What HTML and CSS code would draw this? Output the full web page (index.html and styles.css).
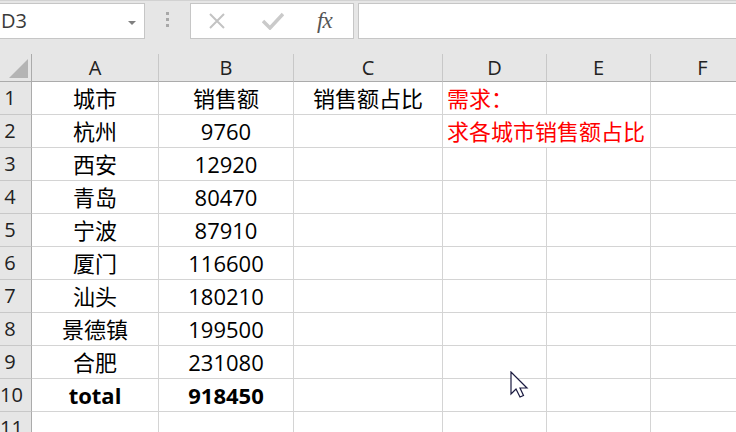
FILE: index.html
```html
<!DOCTYPE html>
<html lang="zh-CN">
  <head>
    <meta charset="utf-8" />
    <title>销售额占比</title>
    <link rel="stylesheet" href="styles.css">
  </head>
  <body>
    <div class="bar">
      <div class="namebox">
        <span class="ref">D3</span>
        <span class="drop"></span>
      </div>
      <div class="grip"><i></i><i></i><i></i></div>
      <div class="fxbtns">
        <svg class="btn" width="16" height="16" viewBox="0 0 16 16">
          <path d="M1 1 L15 15 M15 1 L1 15" stroke="#c3c3c3" stroke-width="2" fill="none"/>
        </svg>
        <svg class="btn" width="22" height="18" viewBox="0 0 22 18">
          <path d="M1 9 L8 16 L21 2" stroke="#cacaca" stroke-width="3.5" fill="none"/>
        </svg>
        <span class="fx">fx</span>
      </div>
      <div class="formula"></div>
    </div>

    <div class="sheet">
      <div class="corner"><span class="tri"></span></div>
      <div class="colhead">A</div>
      <div class="colhead">B</div>
      <div class="colhead">C</div>
      <div class="colhead">D</div>
      <div class="colhead">E</div>
      <div class="colhead">F</div>

      <div class="rowhead">1</div>
      <div class="cell">城市</div>
      <div class="cell">销售额</div>
      <div class="cell">销售额占比</div>
      <div class="cell note">需求：</div>
      <div class="cell"></div>
      <div class="cell"></div>

      <div class="rowhead">2</div>
      <div class="cell">杭州</div>
      <div class="cell">9760</div>
      <div class="cell"></div>
      <div class="cell note wide">求各城市销售额占比</div>
      <div class="cell"></div>

      <div class="rowhead">3</div>
      <div class="cell">西安</div>
      <div class="cell">12920</div>
      <div class="cell"></div><div class="cell"></div><div class="cell"></div><div class="cell"></div>

      <div class="rowhead">4</div>
      <div class="cell">青岛</div>
      <div class="cell">80470</div>
      <div class="cell"></div><div class="cell"></div><div class="cell"></div><div class="cell"></div>

      <div class="rowhead">5</div>
      <div class="cell">宁波</div>
      <div class="cell">87910</div>
      <div class="cell"></div><div class="cell"></div><div class="cell"></div><div class="cell"></div>

      <div class="rowhead">6</div>
      <div class="cell">厦门</div>
      <div class="cell">116600</div>
      <div class="cell"></div><div class="cell"></div><div class="cell"></div><div class="cell"></div>

      <div class="rowhead">7</div>
      <div class="cell">汕头</div>
      <div class="cell">180210</div>
      <div class="cell"></div><div class="cell"></div><div class="cell"></div><div class="cell"></div>

      <div class="rowhead">8</div>
      <div class="cell">景德镇</div>
      <div class="cell">199500</div>
      <div class="cell"></div><div class="cell"></div><div class="cell"></div><div class="cell"></div>

      <div class="rowhead">9</div>
      <div class="cell">合肥</div>
      <div class="cell">231080</div>
      <div class="cell"></div><div class="cell"></div><div class="cell"></div><div class="cell"></div>

      <div class="rowhead">10</div>
      <div class="cell bold">total</div>
      <div class="cell bold">918450</div>
      <div class="cell"></div><div class="cell"></div><div class="cell"></div><div class="cell"></div>

      <div class="rowhead">11</div>
      <div class="cell"></div><div class="cell"></div><div class="cell"></div>
      <div class="cell"></div><div class="cell"></div><div class="cell"></div>
    </div>

    <svg class="cursor" width="20" height="28" viewBox="0 0 20 28">
      <path d="M1 1 L1 23 L6 18 L10 26 L13.5 24.5 L10 17 L17 17 Z" fill="#fff" stroke="#1a1a40" stroke-width="1.2" stroke-linejoin="miter"/>
    </svg>
  </body>
</html>
```

FILE: styles.css
```css
html, body {
  margin: 0;
  height: 100%;
  overflow: hidden;
}
body {
  position: relative;
  background: #fff;
  font-family: "Open Sans", "Noto Sans CJK SC", sans-serif;
  color: #000;
}

/* formula bar */
.bar {
  display: flex;
  align-items: flex-start;
  height: 54px;
  padding-top: 3px;
  box-sizing: border-box;
  background: #e6e6e6;
  border-top: 1px solid #d2d2d2;
}
.namebox {
  position: relative;
  width: 145px;
  height: 36px;
  box-sizing: border-box;
  margin-top: -1px;
  background: #fff;
  border: 1px solid #c6c6c6;
  border-left: none;
}
.namebox .ref {
  position: absolute;
  left: 1px;
  top: 4px;
  font-size: 20px;
  line-height: 26px;
  color: #3a3a3a;
}
.namebox .drop {
  position: absolute;
  left: 128px;
  top: 17px;
  border-left: 4px solid transparent;
  border-right: 4px solid transparent;
  border-top: 4px solid #808080;
}
.grip {
  width: 45px;
  display: flex;
  flex-direction: column;
  align-items: center;
  gap: 3px;
  padding-top: 8px;
}
.grip i {
  display: block;
  width: 3px;
  height: 3px;
  background: #a8a8a8;
}
.fxbtns {
  display: flex;
  align-items: center;
  width: 164px;
  height: 36px;
  margin-top: -1px;
  box-sizing: border-box;
  background: #fff;
  border: 1px solid #c6c6c6;
}
.fxbtns .btn:first-child {
  margin-left: 18px;
}
.fxbtns .btn + .btn {
  margin-left: 37px;
}
.fx {
  margin-left: 33px;
  font-family: "Liberation Serif", serif;
  font-style: italic;
  font-size: 23px;
  color: #555;
  letter-spacing: -1px;
}
.formula {
  flex: 1;
  height: 36px;
  margin-top: -1px;
  margin-left: 4px;
  box-sizing: border-box;
  background: #fff;
  border: 1px solid #c6c6c6;
  border-right: none;
}

/* sheet grid */
.sheet {
  display: grid;
  grid-template-columns: 32px 127px 135px 149px 104px 104px 104px;
  grid-template-rows: 28px repeat(11, 33px);
}
.sheet > div {
  box-sizing: border-box;
}
.corner {
  position: relative;
  background: #e6e6e6;
  border-right: 1px solid #ababab;
  border-bottom: 1px solid #ababab;
}
.corner .tri {
  position: absolute;
  right: 3px;
  bottom: 3px;
  width: 0;
  height: 0;
  border-left: 19px solid transparent;
  border-bottom: 19px solid #b4b4b4;
}
.colhead {
  background: #e6e6e6;
  border-right: 1px solid #c8c8c8;
  border-bottom: 1px solid #ababab;
  text-align: center;
  font-size: 20px;
  line-height: 27px;
  color: #222;
}
.rowhead {
  background: #e6e6e6;
  border-right: 1px solid #ababab;
  border-bottom: 1px solid #c8c8c8;
  padding-right: 11px;
  text-align: center;
  font-size: 20px;
  line-height: 32px;
  color: #222;
}
.cell {
  border-right: 1px solid #d4d4d4;
  border-bottom: 1px solid #d4d4d4;
  text-align: center;
  font-size: 22px;
  line-height: 32px;
  white-space: nowrap;
}
.cell.note {
  color: #ff0000;
  text-align: left;
  padding-left: 4px;
  overflow: visible;
}
.cell.wide {
  grid-column: span 2;
}
.cell.bold {
  font-weight: bold;
}

.cursor {
  position: absolute;
  left: 510px;
  top: 371px;
}
```
